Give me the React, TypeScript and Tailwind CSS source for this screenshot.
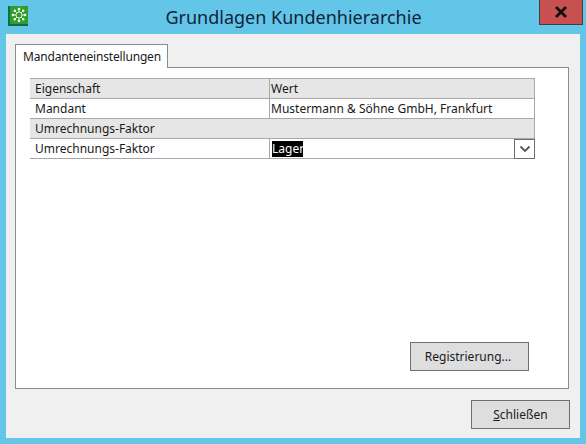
const font = { fontFamily: '"Noto Sans", "Open Sans", sans-serif' };

const Cell = ({ children, className = "" }: { children?: React.ReactNode; className?: string }) => (
  <div className={"flex h-5 items-center px-[5px] text-[12px] text-[#1a1a1a] " + className}>{children}</div>
);

const AppIcon = () => (
  <svg width="20" height="20" viewBox="0 0 20 20" className="shrink-0">
    <rect width="20" height="20" fill="#0b6f4a" />
    <rect x="2" y="0" width="18" height="18" fill="#2f9e2c" />
    <g stroke="#d8f2cf" strokeWidth="1" fill="none">
      <circle cx="11" cy="9" r="3" />
      <path d="M11 3v3M11 12v3M5 9h3M14 9h3M6.8 4.8l2 2M13.2 11.2l2 2M15.2 4.8l-2 2M8.8 11.2l-2 2" />
    </g>
    <g fill="#ffffff">
      <circle cx="11" cy="3" r="1.3" />
      <circle cx="11" cy="15" r="1.3" />
      <circle cx="5" cy="9" r="1.3" />
      <circle cx="17" cy="9" r="1.3" />
      <circle cx="6.8" cy="4.8" r="1.2" />
      <circle cx="15.2" cy="4.8" r="1.2" />
      <circle cx="6.8" cy="13.2" r="1.2" />
      <circle cx="15.2" cy="13.2" r="1.2" />
    </g>
  </svg>
);

export default function App() {
  return (
    <div className="flex h-[444px] w-[586px] flex-col overflow-hidden bg-[#63c6e9] px-[6px] pb-[6px]" style={font}>
      <div className="flex h-[34px] shrink-0">
        <div className="ml-[2px] pt-[6px]">
          <AppIcon />
        </div>
        <div className="flex-1 pt-[4px] pl-[20px] text-center text-[18px] leading-[26px] text-[#10243a]">
          Grundlagen Kundenhierarchie
        </div>
        <div className="mr-[-3px] flex h-[25px] w-[44px] items-center justify-center border border-t-0 border-[#3f3f3f] bg-[#c75050]">
          <svg width="14" height="12" viewBox="0 0 14 12">
            <path d="M2 1l10 10M12 1L2 11" stroke="#111111" strokeWidth="2.8" fill="none" />
          </svg>
        </div>
      </div>

      <div className="flex flex-1 flex-col bg-[#f0f0f0] pt-[10px] pr-[11px] pl-[9px]">
        <div className="flex h-[23px] shrink-0">
          <div className="z-10 mb-[-1px] flex h-[24px] w-[153px] items-center justify-center border border-b-0 border-[#8c8c8c] bg-white pl-[1px] text-[12px] tracking-[-0.18px] text-[#1a1a1a]">
            Mandanteneinstellungen
          </div>
        </div>
        <div className="flex h-[322px] flex-col border border-[#8c8c8c] bg-white pt-[10px] pl-[14px]">
          <div className="grid w-[505px] grid-cols-[239px_1fr] border-b border-[#a8a8a8] [&>*]:border-[#a8a8a8]">
            <Cell className="border-t bg-[#e6e6e6]">Eigenschaft</Cell>
            <Cell className="border-t border-r border-l bg-[#e6e6e6] !px-[1px]">Wert</Cell>
            <Cell className="border-t">Mandant</Cell>
            <Cell className="border-t border-r border-l !px-[1px]">Mustermann &amp; Söhne GmbH, Frankfurt</Cell>
            <Cell className="col-span-2 border-t border-r bg-[#e6e6e6]">Umrechnungs-Faktor</Cell>
            <Cell className="border-t">Umrechnungs-Faktor</Cell>
            <div className="flex h-5 items-center justify-between border-t border-l pl-[2px] text-[12px]">
              <span className="w-[31px] bg-black leading-[16px] text-white">Lager</span>
              <div className="flex h-5 w-[21px] items-center justify-center border border-[#6e6e6e] bg-white">
                <svg width="12" height="8" viewBox="0 0 12 8">
                  <path d="M1.5 1.5L6 6l4.5-4.5" stroke="#555555" strokeWidth="1.8" fill="none" />
                </svg>
              </div>
            </div>
          </div>
          <div className="mt-auto mb-[17px] flex justify-end pr-[39px]">
            <button className="h-[29px] w-[119px] border border-[#707070] bg-[#dedede] pr-[3px] text-[12px] text-[#1a1a1a]">
              Registrierung...
            </button>
          </div>
        </div>
        <div className="mr-[-1px] flex justify-end pt-[11px]">
          <button className="h-[29px] w-[99px] border border-[#707070] bg-[#dedede] text-[12px] text-[#1a1a1a]">
            <span className="underline">S</span>chließen
          </button>
        </div>
      </div>
    </div>
  );
}
